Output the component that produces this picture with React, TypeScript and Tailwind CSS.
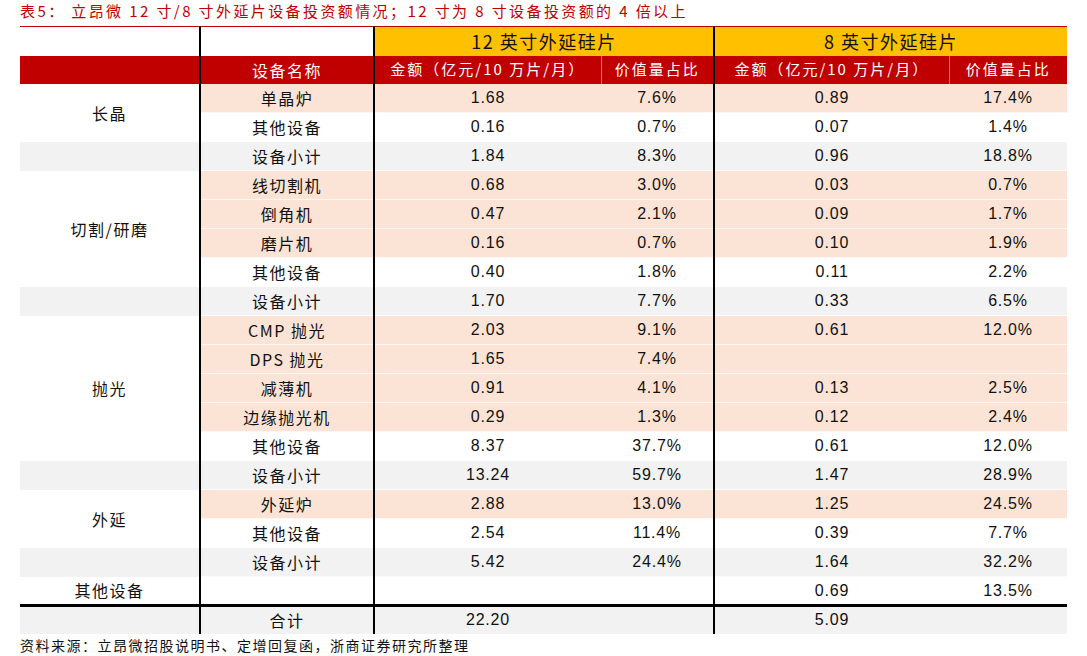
import React from "react";

type Tone = "pink" | "grey" | "white";

interface Row {
  cat?: string;
  span?: number;
  name: string;
  v: [string, string, string, string];
  tone: Tone;
}

const rows: Row[] = [
  { cat: "长晶", span: 2, name: "单晶炉", v: ["1.68", "7.6%", "0.89", "17.4%"], tone: "pink" },
  { name: "其他设备", v: ["0.16", "0.7%", "0.07", "1.4%"], tone: "white" },
  { cat: "", name: "设备小计", v: ["1.84", "8.3%", "0.96", "18.8%"], tone: "grey" },
  { cat: "切割/研磨", span: 4, name: "线切割机", v: ["0.68", "3.0%", "0.03", "0.7%"], tone: "pink" },
  { name: "倒角机", v: ["0.47", "2.1%", "0.09", "1.7%"], tone: "pink" },
  { name: "磨片机", v: ["0.16", "0.7%", "0.10", "1.9%"], tone: "pink" },
  { name: "其他设备", v: ["0.40", "1.8%", "0.11", "2.2%"], tone: "white" },
  { cat: "", name: "设备小计", v: ["1.70", "7.7%", "0.33", "6.5%"], tone: "grey" },
  { cat: "抛光", span: 5, name: "CMP 抛光", v: ["2.03", "9.1%", "0.61", "12.0%"], tone: "pink" },
  { name: "DPS 抛光", v: ["1.65", "7.4%", "", ""], tone: "pink" },
  { name: "减薄机", v: ["0.91", "4.1%", "0.13", "2.5%"], tone: "pink" },
  { name: "边缘抛光机", v: ["0.29", "1.3%", "0.12", "2.4%"], tone: "pink" },
  { name: "其他设备", v: ["8.37", "37.7%", "0.61", "12.0%"], tone: "white" },
  { cat: "", name: "设备小计", v: ["13.24", "59.7%", "1.47", "28.9%"], tone: "grey" },
  { cat: "外延", span: 2, name: "外延炉", v: ["2.88", "13.0%", "1.25", "24.5%"], tone: "pink" },
  { name: "其他设备", v: ["2.54", "11.4%", "0.39", "7.7%"], tone: "white" },
  { cat: "", name: "设备小计", v: ["5.42", "24.4%", "1.64", "32.2%"], tone: "grey" },
  { cat: "其他设备", span: 1, name: "", v: ["", "", "0.69", "13.5%"], tone: "white" },
];

const toneBg: Record<Tone, string> = {
  pink: "bg-[#fbe4d5]",
  grey: "bg-[#f2f2f2]",
  white: "bg-white",
};

const cjk = "[font-family:'Noto_Sans_CJK_SC',sans-serif] text-[16px] tracking-[1.5px]";
const head = "[font-family:'Noto_Sans_CJK_SC',sans-serif] text-[15px] tracking-[2px]";
const num = "[font-family:'Liberation_Sans',sans-serif] text-[16px] tracking-[0.8px]";

export default function App() {
  return (
    <div className="w-[1087px] h-[656px] bg-white text-[#111] overflow-hidden">
      <div className="h-[26px] pl-[20px] pt-[1px] text-[#c00000] text-[15px] leading-[20px] tracking-[2.4px] [font-family:'Noto_Sans_CJK_SC',sans-serif]">
        表5： 立昂微 12 寸/8 寸外延片设备投资额情况；12 寸为 8 寸设备投资额的 4 倍以上
      </div>
      <table className="ml-[20px] w-[1047px] table-fixed border-collapse">
        <colgroup>
          <col className="w-[180px]" />
          <col className="w-[174px]" />
          <col className="w-[227px]" />
          <col className="w-[113px]" />
          <col className="w-[235px]" />
          <col className="w-[118px]" />
        </colgroup>
        <thead>
          <tr className="h-[29px]">
            <th className="p-0 border-t border-t-[#c00000] border-r-2 border-r-black bg-white"></th>
            <th className="p-0 border-t border-t-[#c00000] border-r-2 border-r-black bg-white"></th>
            <th colSpan={2} className="p-0 border-t border-t-[#c00000] border-r-2 border-r-black bg-[#ffc000] font-normal text-[18px] tracking-[1.5px] [font-family:'Noto_Sans_CJK_SC',sans-serif]">
              12 英寸外延硅片
            </th>
            <th colSpan={2} className="p-0 border-t border-t-[#c00000] bg-[#ffc000] font-normal text-[18px] tracking-[1.5px] [font-family:'Noto_Sans_CJK_SC',sans-serif]">
              8 英寸外延硅片
            </th>
          </tr>
          <tr className="h-[28px] bg-[#c00000] text-white">
            <th className="p-0 border-r-2 border-r-black font-normal"></th>
            <th className={`p-0 border-r-2 border-r-black font-normal ${cjk}`}>设备名称</th>
            <th className={`p-0 border-r border-r-[#e07070] font-normal ${head}`}>金额（亿元/10 万片/月）</th>
            <th className={`p-0 border-r-2 border-r-black font-normal ${head}`}>价值量占比</th>
            <th className={`p-0 border-r border-r-[#e07070] font-normal ${head}`}>金额（亿元/10 万片/月）</th>
            <th className={`p-0 font-normal ${head}`}>价值量占比</th>
          </tr>
        </thead>
        <tbody>
          {rows.map((r, i) => (
            <tr key={i} className="h-[29px]">
              {r.cat !== undefined && (
                <td
                  rowSpan={r.span ?? 1}
                  className={`p-0 text-center border-r-2 border-r-black ${r.span ? "bg-white" : toneBg[r.tone]} ${cjk}`}
                >
                  {r.cat}
                </td>
              )}
              <td className={`p-0 text-center border-r-2 border-r-black border-b border-b-white/70 ${toneBg[r.tone]} ${cjk}`}>
                {r.name}
              </td>
              <td className={`p-0 text-center border-b border-b-white/70 ${toneBg[r.tone]} ${num}`}>{r.v[0]}</td>
              <td className={`p-0 text-center border-r-2 border-r-black border-b border-b-white/70 ${toneBg[r.tone]} ${num}`}>{r.v[1]}</td>
              <td className={`p-0 text-center border-b border-b-white/70 ${toneBg[r.tone]} ${num}`}>{r.v[2]}</td>
              <td className={`p-0 text-center border-b border-b-white/70 ${toneBg[r.tone]} ${num}`}>{r.v[3]}</td>
            </tr>
          ))}
          <tr className="h-[28px] bg-[#f2f2f2]">
            <td className="p-0 border-t-[3px] border-t-black border-r-2 border-r-black"></td>
            <td className={`p-0 text-center border-t-[3px] border-t-black border-r-2 border-r-black ${cjk}`}>合计</td>
            <td className={`p-0 text-center border-t-[3px] border-t-black ${num}`}>22.20</td>
            <td className="p-0 border-t-[3px] border-t-black border-r-2 border-r-black"></td>
            <td className={`p-0 text-center border-t-[3px] border-t-black ${num}`}>5.09</td>
            <td className="p-0 border-t-[3px] border-t-black"></td>
          </tr>
        </tbody>
      </table>
      <div className="pl-[20px] pt-[2px] text-[14px] leading-[18px] tracking-[1.5px] [font-family:'Noto_Sans_CJK_SC',sans-serif]">
        资料来源：立昂微招股说明书、定增回复函，浙商证券研究所整理
      </div>
    </div>
  );
}
